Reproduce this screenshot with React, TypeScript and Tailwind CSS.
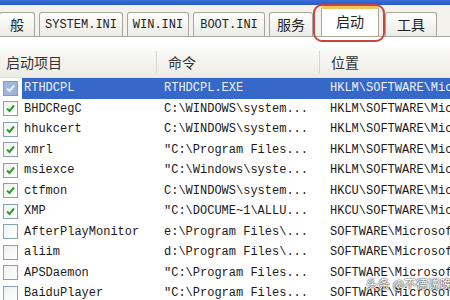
const mono = { fontFamily: '"Liberation Mono", "Noto Sans CJK SC", monospace' };

type Row = { name: string; cmd: string; loc: string; on: boolean };

const rows: Row[] = [
  { name: "RTHDCPL", cmd: "RTHDCPL.EXE", loc: "HKLM\\SOFTWARE\\Mic", on: true },
  { name: "BHDCRegC", cmd: "C:\\WINDOWS\\system...", loc: "HKLM\\SOFTWARE\\Mic", on: true },
  { name: "hhukcert", cmd: "C:\\WINDOWS\\system...", loc: "HKLM\\SOFTWARE\\Mic", on: true },
  { name: "xmrl", cmd: "\"C:\\Program Files...", loc: "HKLM\\SOFTWARE\\Mic", on: true },
  { name: "msiexce", cmd: "\"C:\\Windows\\syste...", loc: "HKLM\\SOFTWARE\\Mic", on: true },
  { name: "ctfmon", cmd: "C:\\WINDOWS\\system...", loc: "HKCU\\SOFTWARE\\Mic", on: true },
  { name: "XMP", cmd: "\"C:\\DOCUME~1\\ALLU...", loc: "HKCU\\SOFTWARE\\Mic", on: true },
  { name: "AfterPlayMonitor", cmd: "e:\\Program Files\\...", loc: "SOFTWARE\\Microsof", on: false },
  { name: "aliim", cmd: "d:\\Program Files\\...", loc: "SOFTWARE\\Microsof", on: false },
  { name: "APSDaemon", cmd: "\"C:\\Program Files...", loc: "SOFTWARE\\Microsof", on: false },
  { name: "BaiduPlayer", cmd: "\"C:\\Program Files...", loc: "SOFTWARE\\Microsof", on: false },
  { name: "BDAgent", cmd: "\"C:\\Program Files...", loc: "SOFTWARE\\Microsof", on: false },
];

function Check({ on, sel }: { on: boolean; sel: boolean }) {
  return (
    <div
      className={`ml-[3px] flex h-[15px] w-[15px] shrink-0 items-center justify-center border ${
        sel ? "border-[#7f9db9] bg-[#9fb6d6]" : "border-[#8aa0b4] bg-gradient-to-br from-[#eef2f0] to-white"
      }`}
    >
      {on && (
        <svg width="11" height="11" viewBox="0 0 11 11">
          <path d="M2 5.5 L4.5 8 L9 2.5" fill="none" stroke={sel ? "#e8eef8" : "#2aa02a"} strokeWidth="2" />
        </svg>
      )}
    </div>
  );
}

function Tab({ label, cjk, w }: { label: string; cjk?: boolean; w: string }) {
  return (
    <div
      className={`${w} flex h-[24px] items-center justify-center rounded-t-[3px] border border-b-0 border-[#a7a69c] bg-gradient-to-b from-white to-[#ecebe4] text-[#222] ${
        cjk ? "text-[14px]" : "text-[12px]"
      }`}
      style={cjk ? { fontFamily: '"Noto Sans CJK SC", sans-serif' } : mono}
    >
      {label}
    </div>
  );
}

export default function App() {
  return (
    <div className="relative h-[300px] w-[450px] overflow-hidden bg-white">
      <div className="h-[5px] bg-gradient-to-b from-[#3c6fd8] to-[#2a58c4]" />

      <div className="flex h-[32px] items-end gap-[4px] border-b border-[#a7a69c] bg-[#f3f2ec] pl-0">
        <Tab label="般" cjk w="w-[36px] -ml-px" />
        <Tab label="SYSTEM.INI" w="w-[84px]" />
        <Tab label="WIN.INI" w="w-[62px]" />
        <Tab label="BOOT.INI" w="w-[72px]" />
        <Tab label="服务" cjk w="w-[44px]" />
        <div className="relative ml-[4px]">
          <div
            className="flex h-[30px] w-[58px] items-center justify-center rounded-t-[3px] border border-b-0 border-t-[3px] border-[#a7a69c] border-t-[#f5c35a] bg-white pb-[2px] text-[14px] text-[#222]"
            style={{ fontFamily: '"Noto Sans CJK SC", sans-serif' }}
          >
            启动
          </div>
          <div className="absolute -left-[8px] -top-[2px] h-[38px] w-[72px] rounded-[9px] border-2 border-[#c8453f]" />
        </div>
        <Tab label="工具" cjk w="w-[52px] ml-[2px]" />
      </div>

      <div className="h-[10px] bg-white" />

      <div
        className="flex h-[31px] items-center border-b border-[#e2e1da] bg-gradient-to-b from-[#fbfbf8] to-[#ecebe4] text-[14px] text-[#333]"
        style={{ fontFamily: '"Noto Sans CJK SC", sans-serif' }}
      >
        <div className="w-[156px] pl-[6px]">启动项目</div>
        <div className="h-[22px] w-px bg-[#d6d5cc]" />
        <div className="w-[162px] pl-[11px]">命令</div>
        <div className="h-[22px] w-px bg-[#d6d5cc]" />
        <div className="flex-1 pl-[11px]">位置</div>
      </div>

      <div className="text-[12px] text-[#1a1a1a]" style={mono}>
        {rows.map((r, i) => {
          const sel = i === 0;
          return (
            <div key={r.name} className="flex h-[20.5px] items-center whitespace-nowrap">
              <Check on={r.on} sel={sel} />
              <div
                className={`ml-[4px] flex h-full flex-1 items-center ${
                  sel ? "bg-[#3568c8] text-[#eef3ff]" : ""
                }`}
              >
                <div className="w-[137px] pl-[2px]">{r.name}</div>
                <div className="w-[164px] pl-[5px]">{r.cmd}</div>
                <div className="flex-1 overflow-hidden pl-[7px]">{r.loc}</div>
              </div>
            </div>
          );
        })}
      </div>

      <div
        className="absolute left-[366px] top-[275px] whitespace-nowrap text-[12px] text-white [text-shadow:0_0_2px_#333,0_0_1px_#222]"
        style={{ fontFamily: '"Noto Sans CJK SC", sans-serif' }}
      >
        头条 @不德说晚安
      </div>
    </div>
  );
}
